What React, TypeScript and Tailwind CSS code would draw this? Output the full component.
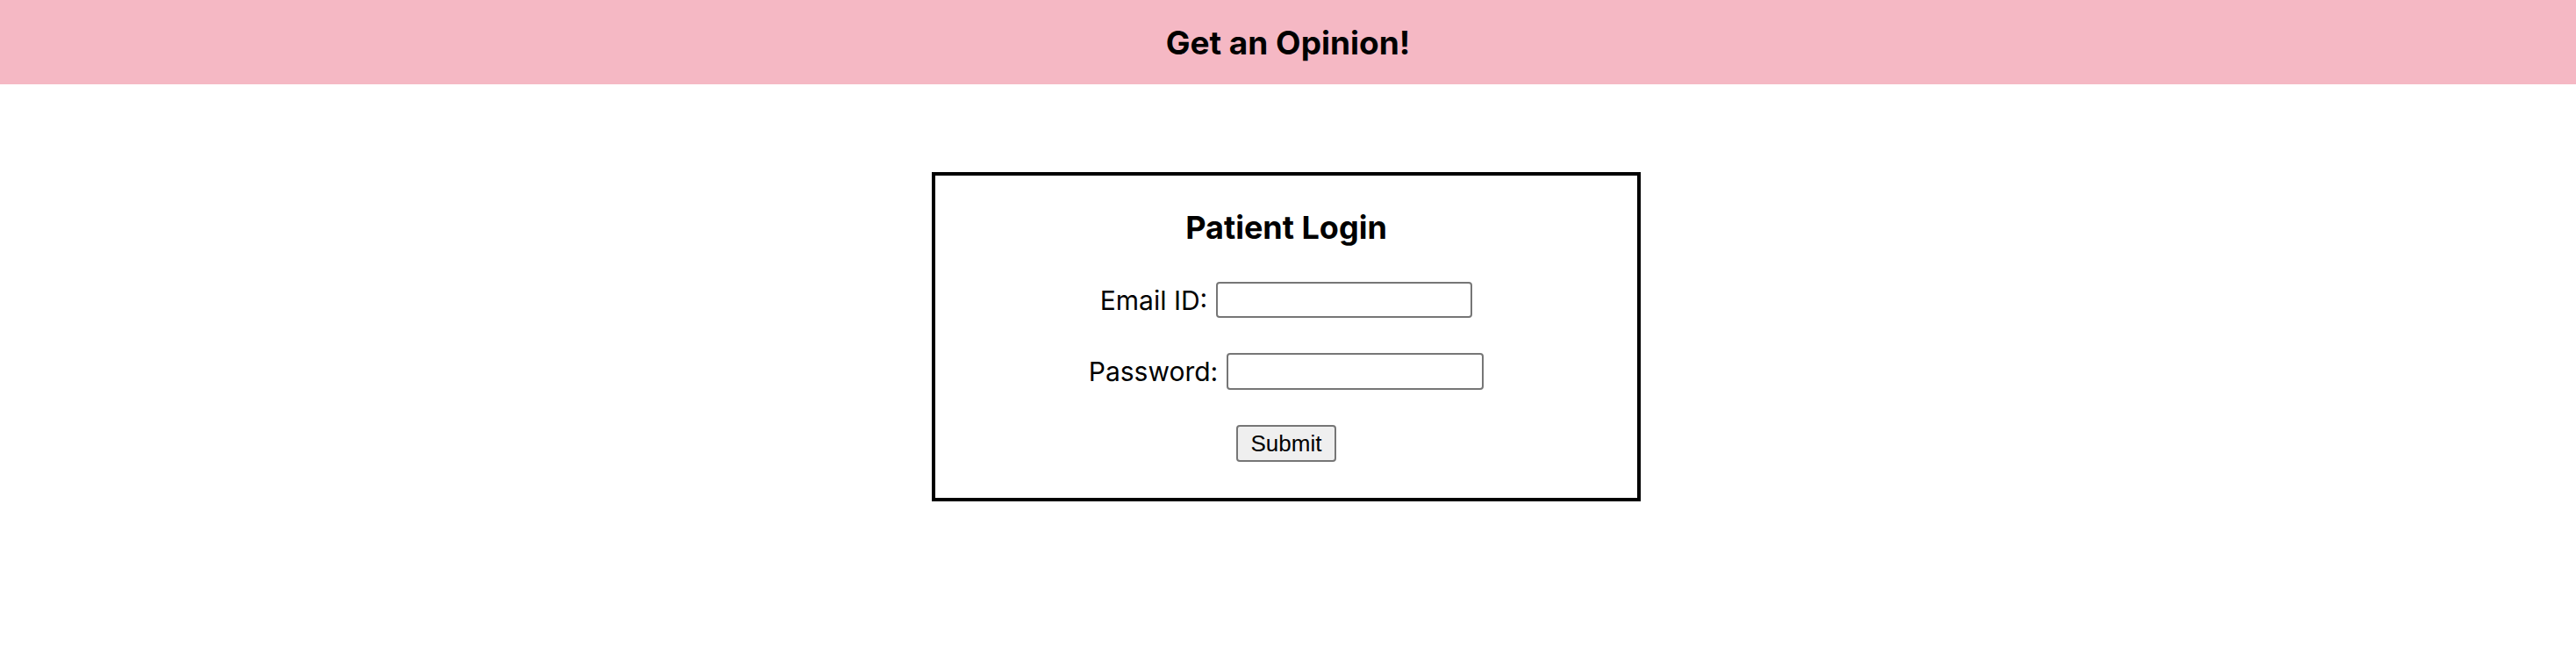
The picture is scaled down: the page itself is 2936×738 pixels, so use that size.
export default function App() {
  return (
    <div className="min-h-screen bg-white font-['Inter',_'Liberation_Sans',_sans-serif] text-black">
      {/* Top bar */}
      <header className="flex h-[96px] items-center justify-center bg-[#f5b8c4]">
        <h1 className="text-[37px] font-bold leading-none">Get an Opinion!</h1>
      </header>

      {/* Login card */}
      <div className="flex justify-center pt-[100px] pr-[4px]">
        <form className="flex w-[808px] flex-col items-center border-4 border-black pt-[41px] pb-[41px]">
          <h2 className="text-[36px] font-bold leading-[36px]">Patient Login</h2>

          <div className="mt-[44px] flex items-center">
            <label className="text-[30px] leading-none">Email ID:</label>
            <input
              type="email"
              className="ml-[10px] h-[41px] w-[292px] rounded-[4px] border-2 border-[#767676] bg-white"
            />
          </div>

          <div className="mt-[40px] flex items-center">
            <label className="text-[30px] leading-none">Password:</label>
            <input
              type="password"
              className="ml-[10px] h-[42px] w-[293px] rounded-[4px] border-2 border-[#767676] bg-white"
            />
          </div>

          <button
            type="button"
            className="mt-[40px] h-[42px] w-[114px] rounded-[4px] border-2 border-[#767676] bg-[#efefef] font-['Liberation_Sans',_sans-serif] text-[26px] leading-none"
          >
            Submit
          </button>
        </form>
      </div>
    </div>
  );
}
